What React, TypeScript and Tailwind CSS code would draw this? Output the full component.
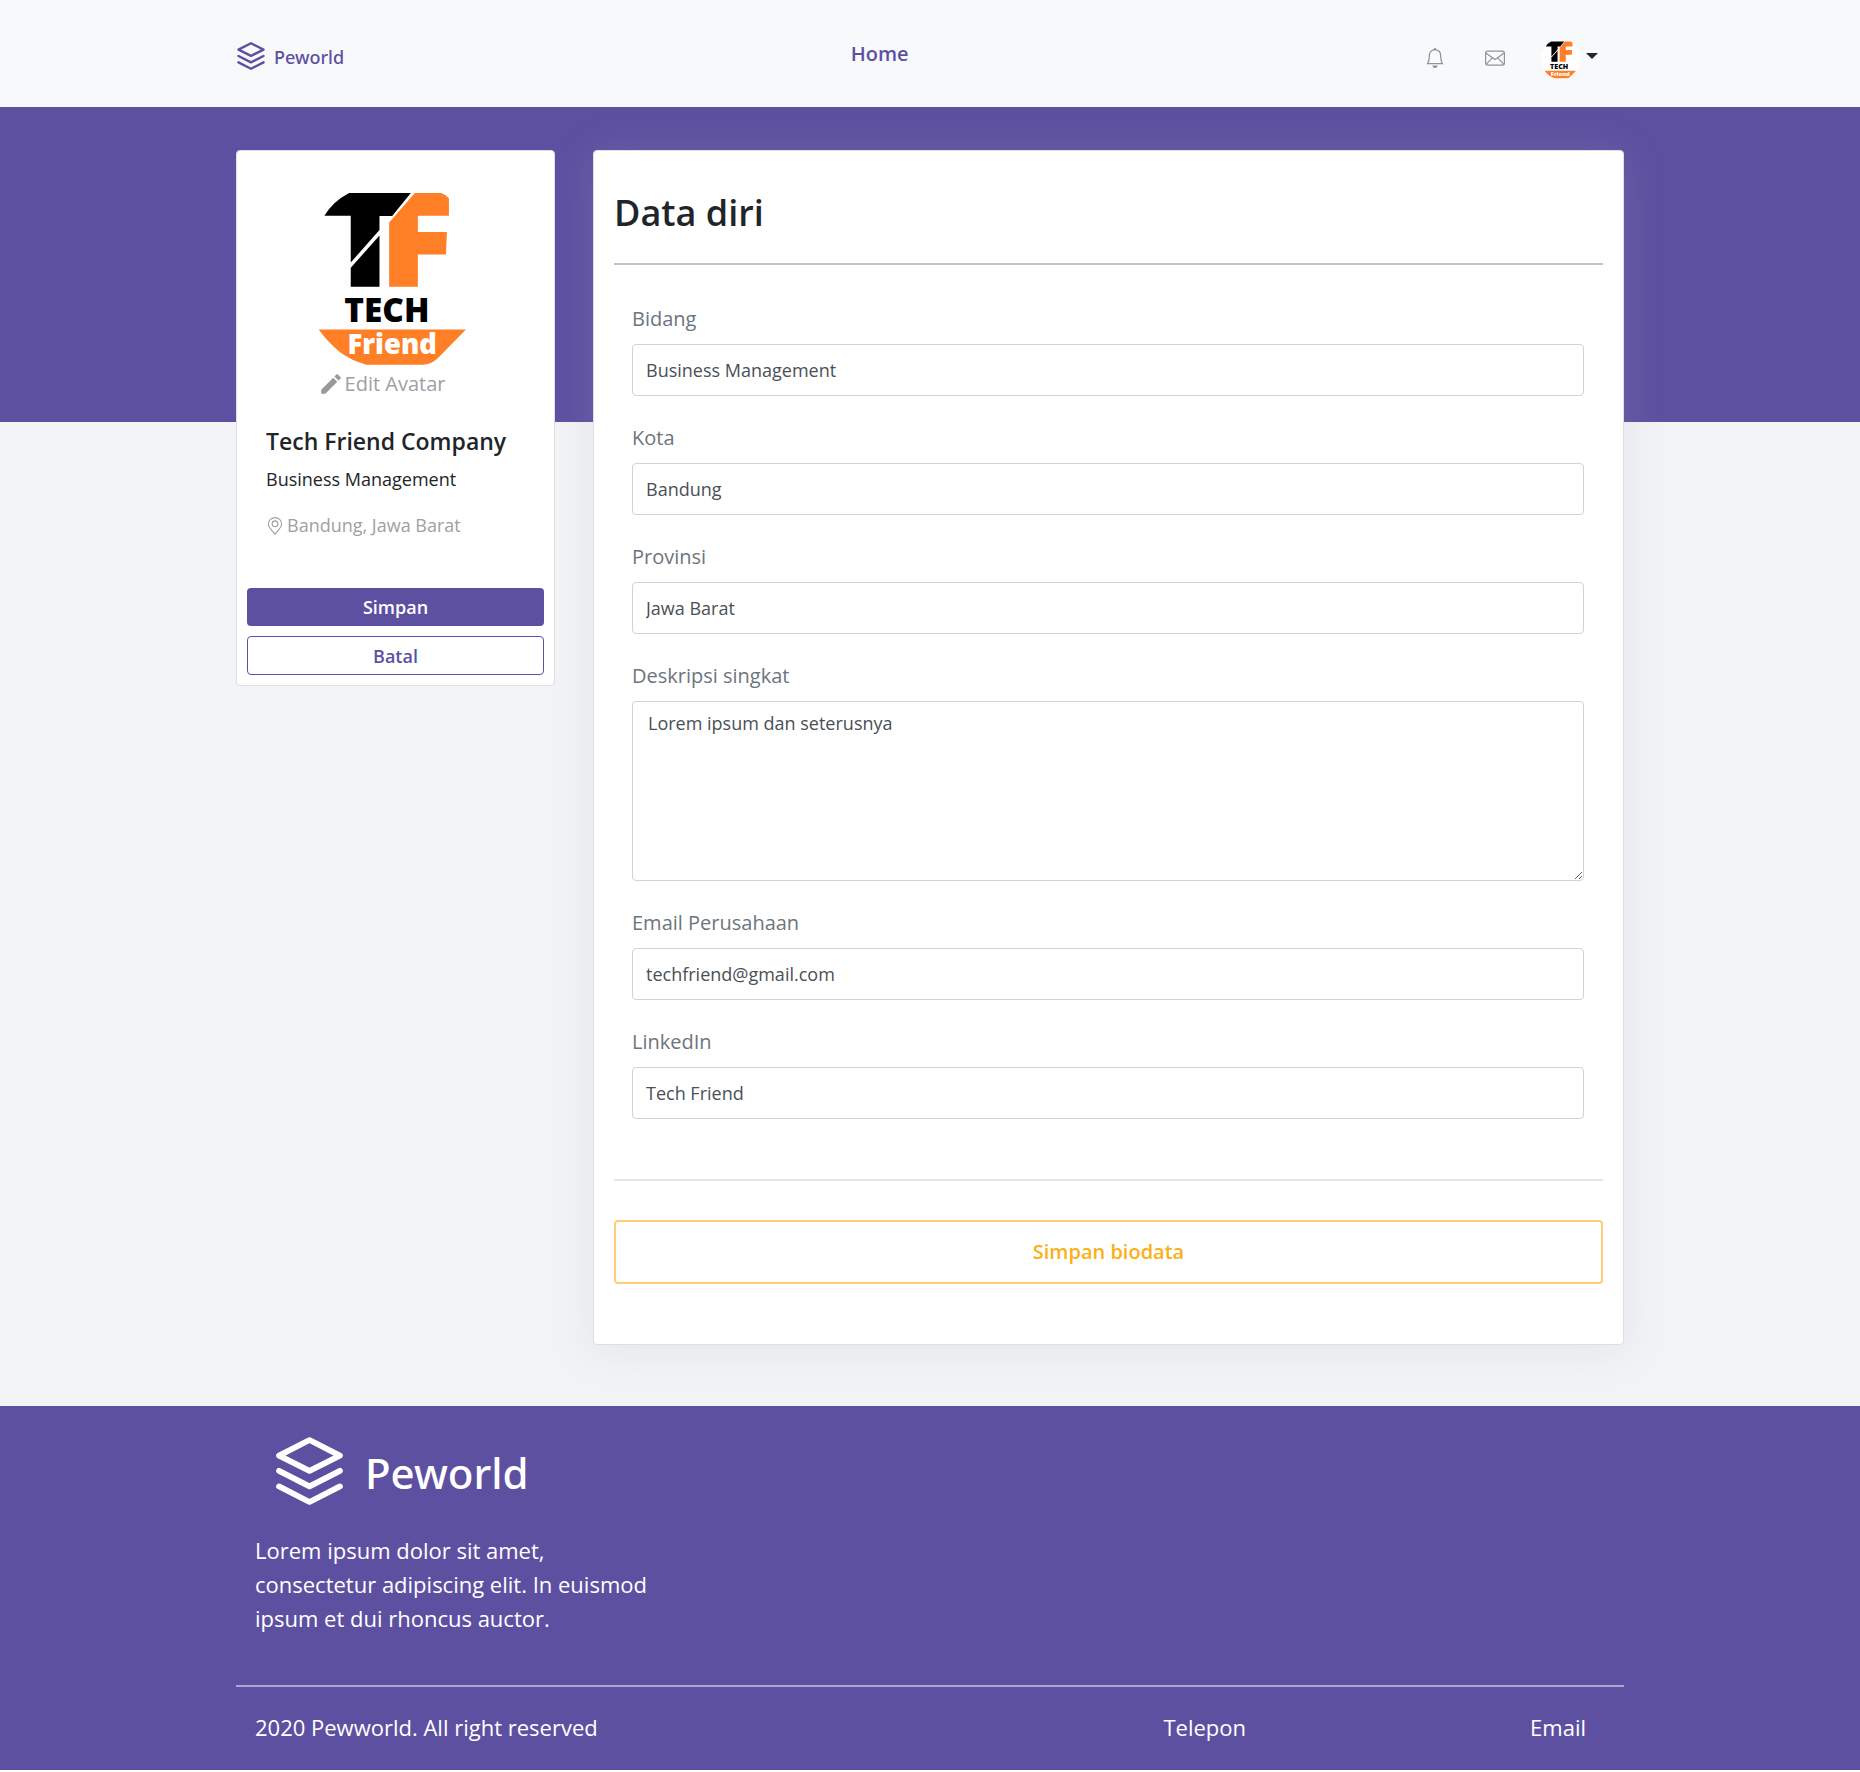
import { MdEdit } from "react-icons/md";

function LayersIcon({ className }: { className: string }) {
  return (
    <svg
      viewBox="171 141 198 201"
      className={className}
      fill="none"
      stroke="currentColor"
      strokeWidth="17"
      strokeLinecap="round"
      strokeLinejoin="round"
      aria-hidden="true"
    >
      <path d="M180 196 270 150 360 196 270 241Z" />
      <path d="M180 241 270 287 360 241" />
      <path d="M180 287 270 333 360 287" />
    </svg>
  );
}

function CompanyLogo({ className }: { className: string }) {
  return (
    <svg viewBox="247 153 560 560" className={className} role="img" aria-label="Tech Friend">
      <circle cx="527" cy="433" r="280" fill="#fefefe" />
      <path
        d="M388 189H573L517 258H479V300L393 397V257H314Q340 214 388 189Z"
        fill="#000"
      />
      <path d="M393 413 479 316V470H393Z" fill="#000" />
      <path
        d="M585 189H663Q675 192 687 205V257H594V306H681L678 373H594V470H508V277Z"
        fill="#ff7f27"
      />
      <path
        d="M297 598H738L655 682Q634 703 608 703H440Q395 691 360 665 325 637 297 598Z"
        fill="#ff7f27"
      />
      <text
        x="501"
        y="574"
        textAnchor="middle"
        fontSize="100"
        className="font-['Noto_Sans'] font-black"
        fill="#000"
      >
        TECH
      </text>
      <text
        x="517"
        y="670"
        textAnchor="middle"
        fontSize="82"
        className="font-['Open_Sans'] font-extrabold"
        fill="#fff"
      >
        Friend
      </text>
    </svg>
  );
}

function BellIcon() {
  return (
    <svg viewBox="0 0 16 16" className="size-5" fill="currentColor" aria-hidden="true">
      <path d="M8 16a2 2 0 0 0 2-2H6a2 2 0 0 0 2 2z" />
      <path
        fillRule="evenodd"
        d="M8 1.918l-.797.161A4.002 4.002 0 0 0 4 6c0 .628-.134 2.197-.459 3.742-.16.767-.376 1.566-.663 2.258h10.244c-.287-.692-.502-1.49-.663-2.258C12.134 8.197 12 6.628 12 6a4.002 4.002 0 0 0-3.203-3.92L8 1.917zM14.22 12c.223.447.481.801.78 1H1c.299-.199.557-.553.78-1C2.68 10.2 3 6.88 3 6c0-2.42 1.72-4.44 4.005-4.901a1 1 0 1 1 1.99 0A5.002 5.002 0 0 1 13 6c0 .88.32 4.2 1.22 6z"
      />
    </svg>
  );
}

function EnvelopeIcon() {
  return (
    <svg
      viewBox="0 0 20 20"
      className="size-5"
      fill="none"
      stroke="currentColor"
      strokeWidth="1.2"
      strokeLinejoin="round"
      aria-hidden="true"
    >
      <rect x="0.6" y="3.1" width="18.8" height="14" rx="2" />
      <path d="M0.8 5 10 11.6 19.2 5M1 16.4 7.4 9.8M19 16.4 12.6 9.8" />
    </svg>
  );
}

function PinIcon() {
  return (
    <svg
      viewBox="0 0 18 18"
      className="size-[18px]"
      fill="none"
      stroke="currentColor"
      strokeWidth="1.1"
      aria-hidden="true"
    >
      <path d="M9 17.2C7 14.6 2.4 10.6 2.4 7a6.6 6.4 0 0 1 13.2 0C15.6 10.6 11 14.6 9 17.2Z" />
      <circle cx="9" cy="6.8" r="2.9" />
    </svg>
  );
}

const fieldClass =
  "block w-full rounded border border-[#ced4da] bg-white text-lg text-[#495057] outline-none";

function Field({ id, label, value, type = "text" }: { id: string; label: string; value: string; type?: string }) {
  return (
    <div>
      <label htmlFor={id} className="mb-2.5 block text-xl leading-[30px] text-[#6c757d]">
        {label}
      </label>
      <input id={id} type={type} defaultValue={value} className={`${fieldClass} h-[52px] px-[13px]`} />
    </div>
  );
}

function Header() {
  return (
    <header className="bg-[#f8f9fb]">
      <nav className="mx-auto flex h-[107px] max-w-[1388px] items-center justify-between">
        <a href="#" className="flex items-center gap-[9px] pt-1 text-[#5e50a1]">
          <LayersIcon className="ml-px size-7" />
          <span className="pt-0.5 font-['Noto_Sans'] text-lg leading-7 font-medium">Peworld</span>
        </a>
        <a href="#" className="text-xl font-semibold text-[#5e50a1]">
          Home
        </a>
        <div className="flex items-center pt-2 pr-[26px]">
          <button type="button" aria-label="Notifikasi" className="px-2.5 text-[#8f9499]">
            <BellIcon />
          </button>
          <button type="button" aria-label="Pesan" className="ml-5 px-2.5 text-[#8f9499]">
            <EnvelopeIcon />
          </button>
          <button type="button" aria-label="Menu akun" className="ml-[26px] flex items-center gap-[5px] pt-0.5">
            <CompanyLogo className="size-10" />
            <span className="mb-1.5 border-x-[6px] border-t-[6px] border-x-transparent border-t-[#212529]" />
          </button>
        </div>
      </nav>
    </header>
  );
}

function ProfileCard() {
  return (
    <aside className="w-[319px] shrink-0 rounded border border-[#dfdfdf] bg-white px-2.5 pt-[30px] pb-2.5">
      <CompanyLogo className="mx-auto size-[187px]" />
      <button
        type="button"
        className="mx-auto mt-px flex items-center gap-px pr-7 text-xl leading-[30px] text-[#9ea0a5]"
      >
        <MdEdit className="size-[26px] text-[#999]" />
        Edit Avatar
      </button>
      <div className="px-[19px]">
        <h2 className="mt-7 text-[23px] leading-[29px] font-semibold">Tech Friend Company</h2>
        <p className="mt-2.5 text-lg leading-[27px]">Business Management</p>
        <p className="mt-[19px] flex items-center gap-[3px] text-lg leading-[27px] text-[#9ea0a5]">
          <PinIcon />
          Bandung, Jawa Barat
        </p>
      </div>
      <div className="mt-[49px] flex flex-col gap-2.5">
        <button type="button" className="h-[38px] rounded bg-[#5e50a1] text-lg font-semibold text-white">
          Simpan
        </button>
        <button
          type="button"
          className="h-[39px] rounded border border-[#5e50a1] bg-white text-lg font-semibold text-[#5e50a1]"
        >
          Batal
        </button>
      </div>
    </aside>
  );
}

function DataForm() {
  return (
    <form className="min-w-0 flex-1 rounded border border-[#dfdfdf] bg-white px-5 pt-10 pb-[60px] shadow-[0_4px_40px_rgba(171,171,171,0.2)]">
      <h1 className="text-4xl leading-[43px] font-semibold">Data diri</h1>
      <hr className="mt-[29px] border-t-2 border-[#c4c4c4]" />
      <div className="mt-[39px] flex flex-col gap-[27px] pr-[19px] pl-[18px]">
        <Field id="bidang" label="Bidang" value="Business Management" />
        <Field id="kota" label="Kota" value="Bandung" />
        <Field id="provinsi" label="Provinsi" value="Jawa Barat" />
        <div>
          <label htmlFor="deskripsi" className="mb-2.5 block text-xl leading-[30px] text-[#6c757d]">
            Deskripsi singkat
          </label>
          <textarea
            id="deskripsi"
            defaultValue="Lorem ipsum dan seterusnya"
            className={`${fieldClass} h-[180px] resize-y px-[15px] py-2 leading-[27px]`}
          />
        </div>
        <Field id="email" label="Email Perusahaan" value="techfriend@gmail.com" type="email" />
        <Field id="linkedin" label="LinkedIn" value="Tech Friend" />
      </div>
      <hr className="mt-[60px] border-t-2 border-[#e2e5ea]" />
      <button
        type="button"
        className="mt-[39px] h-16 w-full rounded border-2 border-[#fdcf74] bg-white text-xl font-semibold text-[#fbb017]"
      >
        Simpan biodata
      </button>
    </form>
  );
}

function Footer() {
  return (
    <footer className="bg-[#5e50a1] text-[22px] leading-[34px] text-white">
      <div className="mx-auto max-w-[1388px] pb-[26px]">
        <div className="flex items-center gap-[22px] px-10 pt-[31px]">
          <LayersIcon className="h-[68px] w-[67px]" />
          <span className="pt-1 font-['Noto_Sans'] text-[42px] leading-[64px] font-medium">Peworld</span>
        </div>
        <p className="mt-7 max-w-[440px] px-[19px]">
          Lorem ipsum dolor sit amet, consectetur adipiscing elit. In euismod ipsum et dui rhoncus auctor.
        </p>
        <hr className="mt-[50px] border-t-2 border-[#afa7d0]" />
        <div className="mt-[23px] flex items-center pr-[38px] pl-[19px]">
          <p className="flex-1">2020 Pewworld. All right reserved</p>
          <a href="#">Telepon</a>
          <a href="#" className="ml-[284px]">
            Email
          </a>
        </div>
      </div>
    </footer>
  );
}

export default function App() {
  return (
    <div className="bg-[#f2f3f7] font-['Open_Sans',sans-serif] text-[#212529]">
      <Header />
      <main className="bg-[linear-gradient(#5e50a1,#5e50a1)] bg-[length:100%_315px] bg-no-repeat pt-[43px] pb-[61px]">
        <div className="mx-auto flex max-w-[1388px] items-start gap-[38px]">
          <ProfileCard />
          <DataForm />
        </div>
      </main>
      <Footer />
    </div>
  );
}
